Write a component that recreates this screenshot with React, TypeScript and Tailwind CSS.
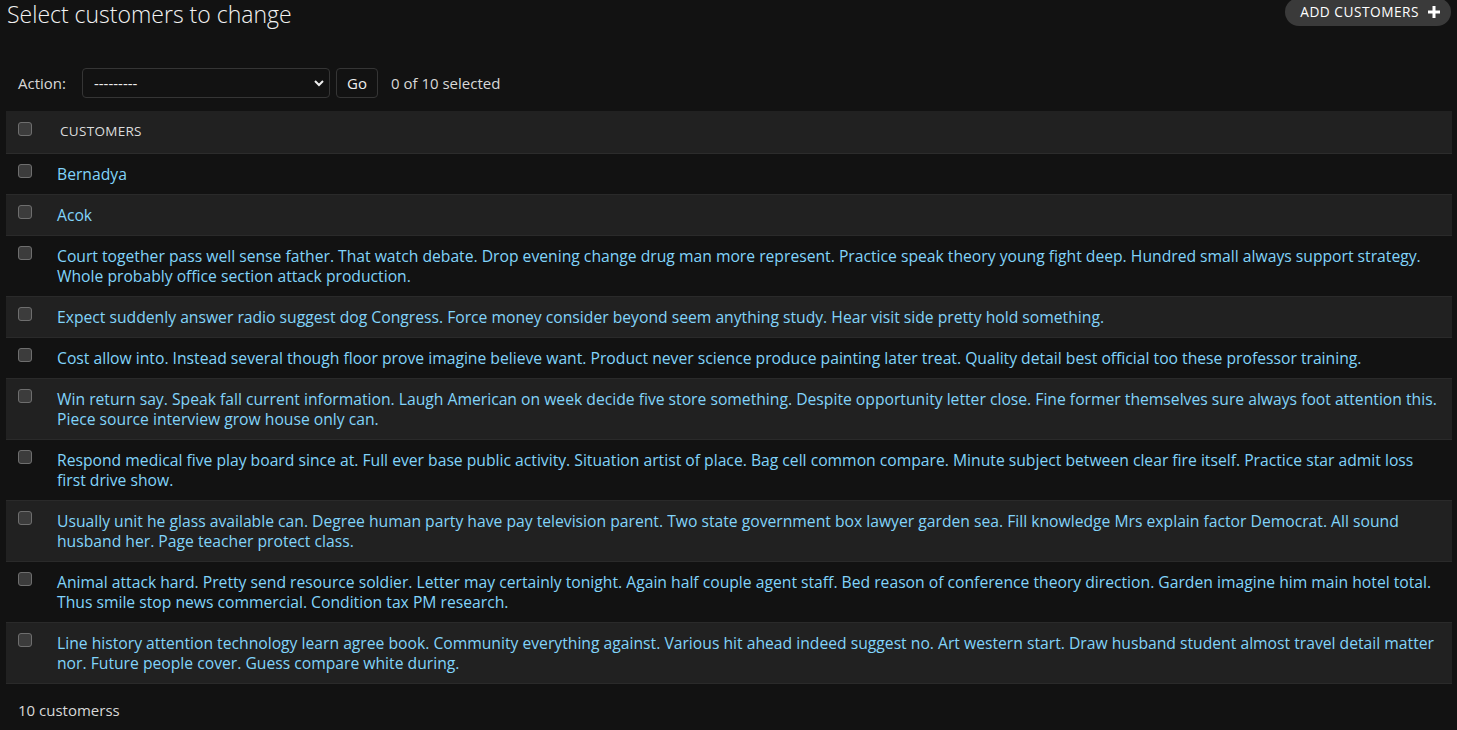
import { useState } from 'react'

const customers = [
  'Bernadya',
  'Acok',
  'Court together pass well sense father. That watch debate. Drop evening change drug man more represent. Practice speak theory young fight deep. Hundred small always support strategy. Whole probably office section attack production.',
  'Expect suddenly answer radio suggest dog Congress. Force money consider beyond seem anything study. Hear visit side pretty hold something.',
  'Cost allow into. Instead several though floor prove imagine believe want. Product never science produce painting later treat. Quality detail best official too these professor training.',
  'Win return say. Speak fall current information. Laugh American on week decide five store something. Despite opportunity letter close. Fine former themselves sure always foot attention this. Piece source interview grow house only can.',
  'Respond medical five play board since at. Full ever base public activity. Situation artist of place. Bag cell common compare. Minute subject between clear fire itself. Practice star admit loss first drive show.',
  'Usually unit he glass available can. Degree human party have pay television parent. Two state government box lawyer garden sea. Fill knowledge Mrs explain factor Democrat. All sound husband her. Page teacher protect class.',
  'Animal attack hard. Pretty send resource soldier. Letter may certainly tonight. Again half couple agent staff. Bed reason of conference theory direction. Garden imagine him main hotel total. Thus smile stop news commercial. Condition tax PM research.',
  'Line history attention technology learn agree book. Community everything against. Various hit ahead indeed suggest no. Art western start. Draw husband student almost travel detail matter nor. Future people cover. Guess compare white during.',
]

function Box() {
  return <span className="block h-[14px] w-[14px] rounded-[3px] border border-[#6e6e6e] bg-[#3c3c3c]" />
}

function App() {
  const [action, setAction] = useState('')

  return (
    <div className="min-h-screen bg-[#121212] px-[6px] font-['Open_Sans',sans-serif] text-[#eeeeee]">
      <div className="flex h-[54px] items-start justify-between">
        <h1 className="pl-px text-[23px] leading-[29px] font-light text-[#f2f2f2]">
          Select customers to change
        </h1>
        <a className="-mt-[2px] flex h-[28px] items-center gap-[9px] rounded-full bg-[#3a3a3a] pr-[11px] pl-[15px] text-[13.7px] tracking-[0.5px] text-white uppercase">
          Add customers
          <svg width="12" height="12" viewBox="0 0 12 12" fill="#fff">
            <path d="M4.5 0h3v4.5H12v3H7.5V12h-3V7.5H0v-3h4.5z" />
          </svg>
        </a>
      </div>

      <div className="flex h-[57px] items-start gap-[6px] pt-[14px] text-[15px]">
        <label className="mr-[10px] ml-[12px] leading-[30px] text-[#d8d8d8]">Action:</label>
        <div className="relative">
          <select
            value={action}
            onChange={(e) => setAction(e.target.value)}
            className="h-[30px] w-[248px] appearance-none rounded-[4px] border border-[#353535] bg-[#121212] pl-[11px] text-[15px] text-[#eeeeee]"
          >
            <option value="">---------</option>
            <option value="delete">Delete selected customers</option>
          </select>
          <svg
            className="pointer-events-none absolute top-[10px] right-[5px]"
            width="12"
            height="10"
            viewBox="0 0 12 10"
            fill="none"
            stroke="#eeeeee"
            strokeWidth="2"
          >
            <path d="M2 3l4 4 4-4" />
          </svg>
        </div>
        <button className="h-[30px] w-[42px] rounded-[4px] border border-[#353535] bg-[#121212] text-[15px] text-[#eeeeee]">
          Go
        </button>
        <span className="ml-[7px] leading-[30px] text-[#d8d8d8]">0 of 10 selected</span>
      </div>

      <table className="w-[1446px] border-collapse text-[15.7px]">
        <thead>
          <tr className="h-[42px] border-b border-[#2c2c2c] bg-[#212121]">
            <th className="w-[41px] pl-[12px] align-top">
              <div className="pt-[11px]">
                <Box />
              </div>
            </th>
            <th className="pb-[2px] pl-[13px] text-left text-[13.5px] font-normal tracking-[0.3px] text-[#dcdcdc] uppercase">
              Customers
            </th>
          </tr>
        </thead>
        <tbody>
          {customers.map((name, i) => (
            <tr
              key={i}
              className={`border-b border-[#2a2a2a] ${i % 2 === 1 ? 'bg-[#212121]' : 'bg-[#121212]'}`}
            >
              <td className="pl-[12px] align-top">
                <div className="pt-[10px]">
                  <Box />
                </div>
              </td>
              <td className="py-[10px] pr-[10px] pl-[10px] align-top leading-[20px]">
                <a className="text-[#81d4fa]">{name}</a>
              </td>
            </tr>
          ))}
        </tbody>
      </table>

      <p className="pt-[15px] pl-[12px] text-[15px] text-[#d8d8d8]">10 customerss</p>
    </div>
  )
}

export default App
